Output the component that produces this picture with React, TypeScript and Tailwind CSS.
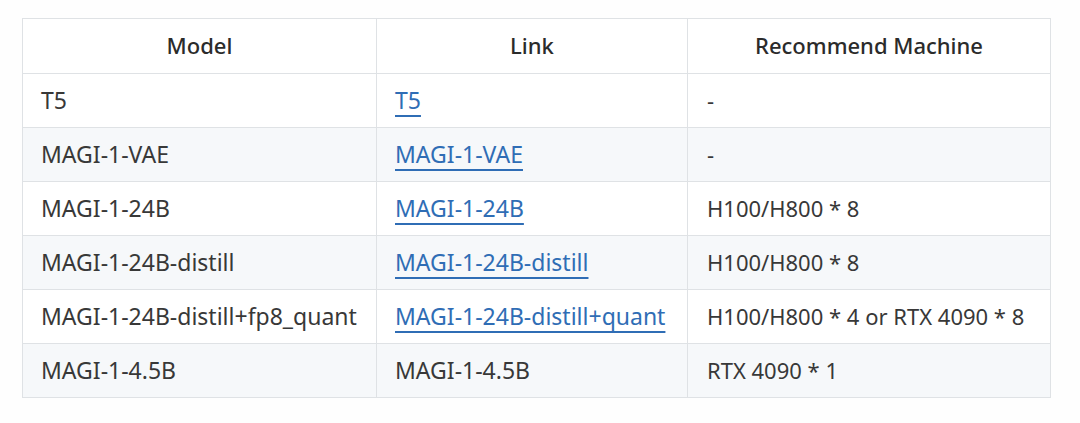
const ROWS: { model: string; link: string; href: boolean; machine: string }[] = [
  { model: "T5", link: "T5", href: true, machine: "-" },
  { model: "MAGI-1-VAE", link: "MAGI-1-VAE", href: true, machine: "-" },
  { model: "MAGI-1-24B", link: "MAGI-1-24B", href: true, machine: "H100/H800 * 8" },
  { model: "MAGI-1-24B-distill", link: "MAGI-1-24B-distill", href: true, machine: "H100/H800 * 8" },
  {
    model: "MAGI-1-24B-distill+fp8_quant",
    link: "MAGI-1-24B-distill+quant",
    href: true,
    machine: "H100/H800 * 4 or RTX 4090 * 8",
  },
  { model: "MAGI-1-4.5B", link: "MAGI-1-4.5B", href: false, machine: "RTX 4090 * 1" },
];

export default function App() {
  return (
    <div className="w-[1080px] h-[423px] bg-[#fefefe] pt-[18px] pl-[22px] font-['Noto_Sans','Open_Sans',sans-serif] text-[23px] text-[#383838]">
      <table className="w-[1028px] border-collapse table-fixed">
        <colgroup>
          <col className="w-[354px]" />
          <col className="w-[311px]" />
          <col className="w-[363px]" />
        </colgroup>
        <thead>
          <tr className="h-[55px] bg-white">
            <th className="border border-[#dfe2e5] pb-[2px] text-[22px] font-medium text-[#2b2b2b] text-center">Model</th>
            <th className="border border-[#dfe2e5] pb-[2px] text-[22px] font-medium text-[#2b2b2b] text-center">Link</th>
            <th className="border border-[#dfe2e5] pb-[2px] text-[22px] font-medium text-[#2b2b2b] text-center">
              Recommend Machine
            </th>
          </tr>
        </thead>
        <tbody>
          {ROWS.map((r, i) => (
            <tr key={r.model} className={`h-[54px] ${i % 2 === 1 ? "bg-[#f6f8fa]" : "bg-white"}`}>
              <td className="border border-[#dfe2e5] pl-[18px] pr-4 whitespace-nowrap">{r.model}</td>
              <td className="border border-[#dfe2e5] pl-[18px] pr-4 whitespace-nowrap">
                {r.href ? (
                  <a
                    href="#"
                    className="text-[#2f6db5] underline decoration-2 underline-offset-[6px] decoration-[#2f6db5]"
                  >
                    {r.link}
                  </a>
                ) : (
                  r.link
                )}
              </td>
              <td className="border border-[#dfe2e5] pl-[19px] pr-4 text-[22px] whitespace-nowrap">{r.machine}</td>
            </tr>
          ))}
        </tbody>
      </table>
    </div>
  );
}
